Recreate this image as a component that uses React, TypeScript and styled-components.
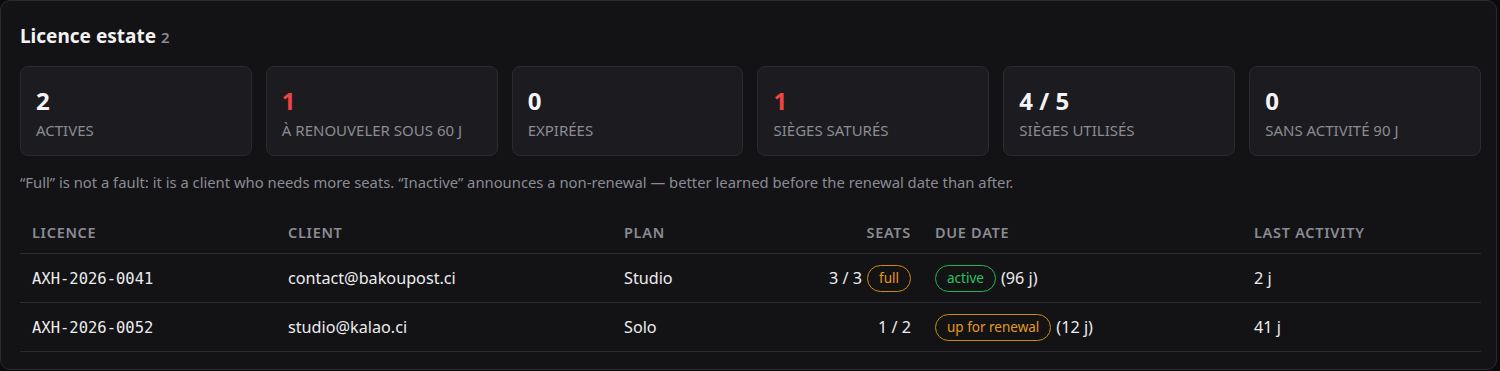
import React from 'react';
import styled, { createGlobalStyle } from 'styled-components';

const GlobalStyle = createGlobalStyle`
	html, body {
		margin: 0;
		padding: 0;
		background: #0b0b0d;
		font-family: 'Noto Sans', 'Open Sans', sans-serif;
		color: #e8e8ea;
	}
`;

type Tone = 'default' | 'danger';
type PillTone = 'warn' | 'ok';

const stats: { value: string; label: string; tone: Tone }[] = [
	{ value: '2', label: 'Actives', tone: 'default' },
	{ value: '1', label: 'À renouveler sous 60 j', tone: 'danger' },
	{ value: '0', label: 'Expirées', tone: 'default' },
	{ value: '1', label: 'Sièges saturés', tone: 'danger' },
	{ value: '4 / 5', label: 'Sièges utilisés', tone: 'default' },
	{ value: '0', label: 'Sans activité 90 j', tone: 'default' },
];

const rows = [
	{
		id: 'AXH-2026-0041',
		client: 'contact@bakoupost.ci',
		plan: 'Studio',
		seats: '3 / 3',
		seatsPill: 'full',
		status: 'active',
		statusTone: 'ok' as PillTone,
		days: '(96 j)',
		last: '2 j',
	},
	{
		id: 'AXH-2026-0052',
		client: 'studio@kalao.ci',
		plan: 'Solo',
		seats: '1 / 2',
		seatsPill: null,
		status: 'up for renewal',
		statusTone: 'warn' as PillTone,
		days: '(12 j)',
		last: '41 j',
	},
];

const App: React.FC = () => {
	return (
		<>
			<GlobalStyle />
			<Panel>
				<Heading>
					Licence estate <Count>2</Count>
				</Heading>
				<StatGrid>
					{stats.map((s) => (
						<StatCard key={s.label}>
							<StatValue $tone={s.tone}>{s.value}</StatValue>
							<StatLabel>{s.label}</StatLabel>
						</StatCard>
					))}
				</StatGrid>
				<Note>
					“Full” is not a fault: it is a client who needs more seats. “Inactive” announces a non-renewal — better
					learned before the renewal date than after.
				</Note>
				<Table>
					<colgroup>
						<col style={{ width: 256 }} />
						<col style={{ width: 336 }} />
						<col style={{ width: 160 }} />
						<col style={{ width: 151 }} />
						<col style={{ width: 319 }} />
						<col />
					</colgroup>
					<thead>
						<tr>
							<Th>Licence</Th>
							<Th>Client</Th>
							<Th>Plan</Th>
							<Th $right>Seats</Th>
							<Th>Due date</Th>
							<Th>Last activity</Th>
						</tr>
					</thead>
					<tbody>
						{rows.map((r) => (
							<tr key={r.id}>
								<Td>
									<Mono>{r.id}</Mono>
								</Td>
								<Td>{r.client}</Td>
								<Td>{r.plan}</Td>
								<Td $right>
									<Inline $end>
										{r.seats}
										{r.seatsPill && <Pill $tone="warn">{r.seatsPill}</Pill>}
									</Inline>
								</Td>
								<Td>
									<Inline>
										<Pill $tone={r.statusTone}>{r.status}</Pill>
										{r.days}
									</Inline>
								</Td>
								<Td>{r.last}</Td>
							</tr>
						))}
					</tbody>
				</Table>
			</Panel>
		</>
	);
};

const Panel = styled.section`
	box-sizing: border-box;
	width: 1497px;
	height: 370px;
	background: #131316;
	border: 1px solid #2a2a2f;
	border-radius: 10px;
	padding: 20px 15px 0 19px;
`;

const Heading = styled.h2`
	margin: 0;
	font-size: 19px;
	font-weight: 700;
	line-height: 30px;
	color: #f2f2f4;
`;

const Count = styled.span`
	font-size: 15px;
	font-weight: 600;
	color: #8b8b92;
`;

const StatGrid = styled.div`
	display: grid;
	grid-template-columns: repeat(6, 1fr);
	gap: 14px;
	margin-top: 14px;
`;

const StatCard = styled.div`
	box-sizing: border-box;
	height: 90px;
	background: #1c1c20;
	border: 1px solid #2a2a2f;
	border-radius: 8px;
	padding: 18px 15px 0;
`;

const StatValue = styled.div<{ $tone: Tone }>`
	font-size: 24px;
	font-weight: 700;
	line-height: 32px;
	color: ${(p) => (p.$tone === 'danger' ? '#ef4444' : '#f4f4f6')};
`;

const StatLabel = styled.div`
	margin-top: 3px;
	font-size: 15px;
	line-height: 20px;
	text-transform: uppercase;
	color: #8b8b92;
`;

const Note = styled.p`
	margin: 15px 0 0;
	font-size: 14.8px;
	line-height: 22px;
	color: #8b8b92;
`;

const Table = styled.table`
	width: 100%;
	margin-top: 28px;
	border-collapse: collapse;
	table-layout: fixed;
	font-size: 16.2px;
	color: #ececef;
`;

const Th = styled.th<{ $right?: boolean }>`
	text-align: ${(p) => (p.$right ? 'right' : 'left')};
	padding: 0 12px 10px;
	height: 22px;
	font-size: 14.5px;
	font-weight: 600;
	letter-spacing: 0.7px;
	text-transform: uppercase;
	color: #8b8b92;
	border-bottom: 1px solid #2a2a2f;
`;

const Td = styled.td<{ $right?: boolean }>`
	text-align: ${(p) => (p.$right ? 'right' : 'left')};
	height: 48px;
	padding: 0 12px;
	border-bottom: 1px solid #2a2a2f;
	white-space: nowrap;
`;

const Mono = styled.span`
	font-family: 'DejaVu Sans Mono', 'Liberation Mono', monospace;
	font-size: 15.5px;
	color: #ececef;
`;

const Inline = styled.span<{ $end?: boolean }>`
	display: inline-flex;
	align-items: center;
	gap: 5px;
	justify-content: ${(p) => (p.$end ? 'flex-end' : 'flex-start')};
`;

const Pill = styled.span<{ $tone: PillTone }>`
	display: inline-flex;
	align-items: center;
	box-sizing: border-box;
	height: 27px;
	padding: 0 11px;
	border-radius: 999px;
	font-size: 13.5px;
	border: 1px solid ${(p) => (p.$tone === 'ok' ? '#22b455' : '#d18a10')};
	color: ${(p) => (p.$tone === 'ok' ? '#2bc45f' : '#e39a1a')};
`;

export default App;
